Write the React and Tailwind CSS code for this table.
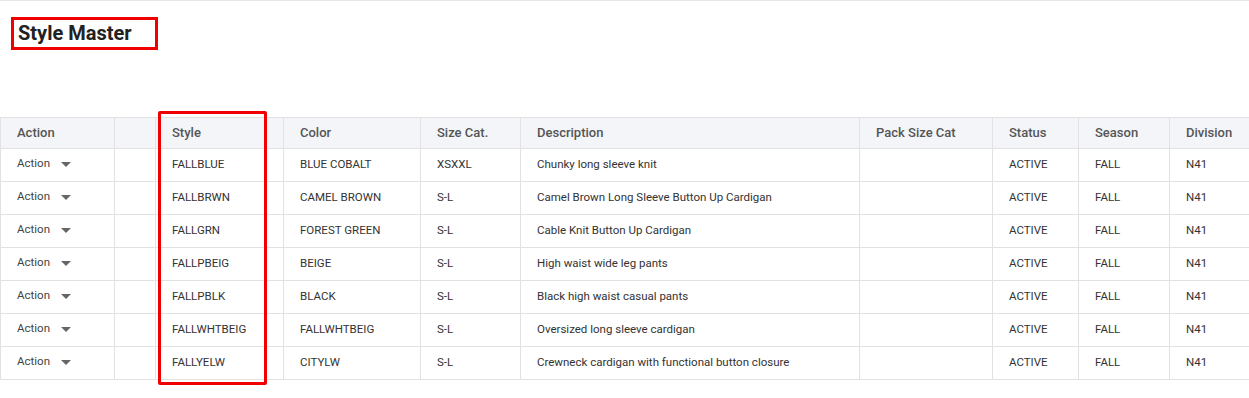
const columns = [
  { label: "Action", w: "w-[114px]" },
  { label: "", w: "w-[41px]" },
  { label: "Style", w: "w-[128px]" },
  { label: "Color", w: "w-[137px]" },
  { label: "Size Cat.", w: "w-[100px]" },
  { label: "Description", w: "w-[339px]" },
  { label: "Pack Size Cat", w: "w-[133px]" },
  { label: "Status", w: "w-[86px]" },
  { label: "Season", w: "w-[91px]" },
  { label: "Division", w: "w-[80px]" },
]

const rows = [
  ["FALLBLUE", "BLUE COBALT", "XSXXL", "Chunky long sleeve knit"],
  ["FALLBRWN", "CAMEL BROWN", "S-L", "Camel Brown Long Sleeve Button Up Cardigan"],
  ["FALLGRN", "FOREST GREEN", "S-L", "Cable Knit Button Up Cardigan"],
  ["FALLPBEIG", "BEIGE", "S-L", "High waist wide leg pants"],
  ["FALLPBLK", "BLACK", "S-L", "Black high waist casual pants"],
  ["FALLWHTBEIG", "FALLWHTBEIG", "S-L", "Oversized long sleeve cardigan"],
  ["FALLYELW", "CITYLW", "S-L", "Crewneck cardigan with functional button closure"],
]

function ActionDropdown() {
  return (
    <div className="flex items-center gap-[11px] text-[#444]">
      <span>Action</span>
      <svg width="10" height="5" viewBox="0 0 10 5" className="mt-[1px]">
        <path d="M0 0 L10 0 L5 5 Z" fill="#666" />
      </svg>
    </div>
  )
}

export default function App() {
  return (
    <div
      className="relative w-[1249px] h-[398px] overflow-hidden bg-white border-t border-[#e6e6e6]"
      style={{ fontFamily: "Roboto, 'Liberation Sans', sans-serif" }}
    >
      <div className="pt-[16px] pl-[11px]">
        <div className="inline-block border-[3px] border-[#f00000] pl-[4px] pr-[23px] h-[33px] leading-[27px]">
          <h1 className="text-[20px] font-bold text-[#222]">Style Master</h1>
        </div>
      </div>

      <table className="mt-[67px] table-fixed border-collapse w-[1249px] text-[11.5px]">
        <colgroup>
          {columns.map((c, i) => (
            <col key={i} className={c.w} />
          ))}
        </colgroup>
        <thead>
          <tr className="h-[31px] bg-[#f4f5f9]">
            {columns.map((c, i) => (
              <th
                key={i}
                className="border border-[#e2e2e2] px-[16px] text-left text-[13px] font-medium text-[#555]"
              >
                {c.label}
              </th>
            ))}
          </tr>
        </thead>
        <tbody>
          {rows.map((r, i) => (
            <tr key={i} className="h-[33px] text-[#333]">
              <td className="border border-[#e2e2e2] px-[16px] pb-[2px]">
                <ActionDropdown />
              </td>
              <td className="border border-[#e2e2e2]"></td>
              <td className="border border-[#e2e2e2] px-[16px]">{r[0]}</td>
              <td className="border border-[#e2e2e2] px-[16px]">{r[1]}</td>
              <td className="border border-[#e2e2e2] px-[16px]">{r[2]}</td>
              <td className="border border-[#e2e2e2] px-[16px]">{r[3]}</td>
              <td className="border border-[#e2e2e2] px-[16px]"></td>
              <td className="border border-[#e2e2e2] px-[16px]">ACTIVE</td>
              <td className="border border-[#e2e2e2] px-[16px]">FALL</td>
              <td className="border border-[#e2e2e2] px-[16px]">N41</td>
            </tr>
          ))}
        </tbody>
      </table>

      {/* highlight around Style column */}
      <div className="absolute left-[158px] top-[110px] w-[109px] h-[274px] border-[3px] border-[#f00000] rounded-[2px]" />
    </div>
  )
}
